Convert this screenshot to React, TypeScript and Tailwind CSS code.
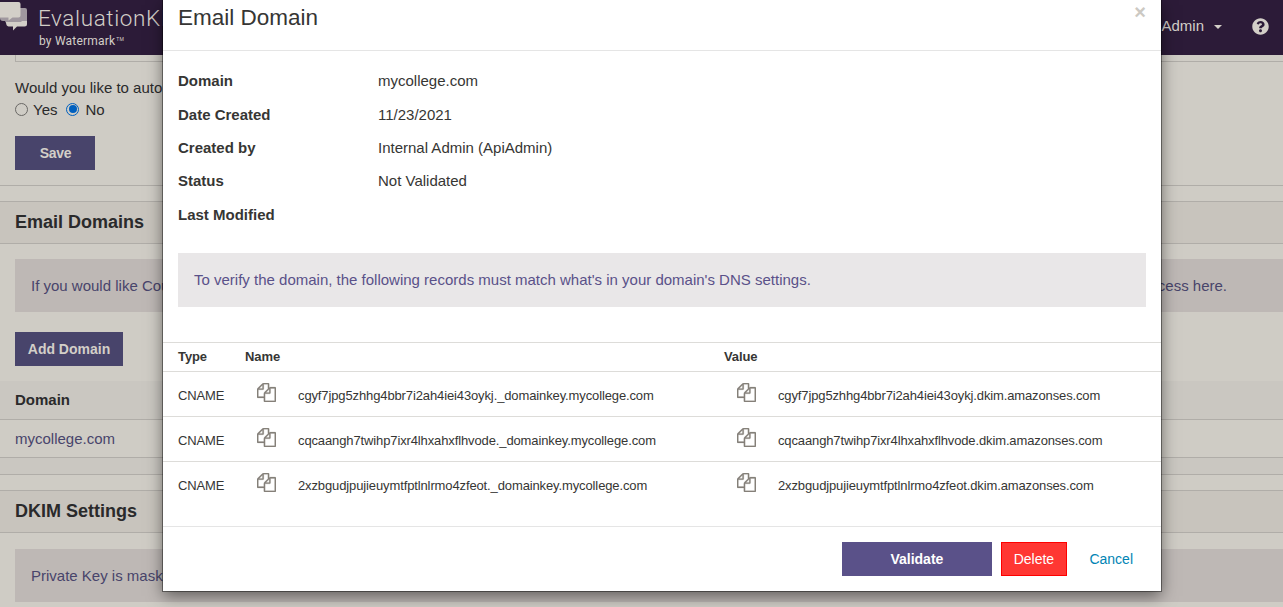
import { ReactNode } from "react"
import { FaQuestionCircle } from "react-icons/fa"

type DnsRecord = {
  type: string
  name: string
  value: string
}

const details = [
  { label: "Domain", value: "mycollege.com" },
  { label: "Date Created", value: "11/23/2021" },
  { label: "Created by", value: "Internal Admin (ApiAdmin)" },
  { label: "Status", value: "Not Validated" },
  { label: "Last Modified", value: "" },
]

const records: DnsRecord[] = [
  {
    type: "CNAME",
    name: "cgyf7jpg5zhhg4bbr7i2ah4iei43oykj._domainkey.mycollege.com",
    value: "cgyf7jpg5zhhg4bbr7i2ah4iei43oykj.dkim.amazonses.com",
  },
  {
    type: "CNAME",
    name: "cqcaangh7twihp7ixr4lhxahxflhvode._domainkey.mycollege.com",
    value: "cqcaangh7twihp7ixr4lhxahxflhvode.dkim.amazonses.com",
  },
  {
    type: "CNAME",
    name: "2xzbgudjpujieuymtfptlnlrmo4zfeot._domainkey.mycollege.com",
    value: "2xzbgudjpujieuymtfptlnlrmo4zfeot.dkim.amazonses.com",
  },
]

const CopyIcon = () => (
  <svg
    viewBox="0 0 1792 1792"
    className="mb-[5px] size-[19px] shrink-0"
    fill="#85807a"
    stroke="#85807a"
    strokeWidth="20"
  >
    <path d="M1696 384q40 0 68 28t28 68v1216q0 40-28 68t-68 28h-960q-40 0-68-28t-28-68v-288h-544q-40 0-68-28t-28-68v-672q0-40 20-88t48-76l408-408q28-28 76-48t88-20h416q40 0 68 28t28 68v328q68-40 128-40h416zm-544 213l-299 299h299v-299zm-640-384l-299 299h299v-299zm196 647l316-316v-416h-384v416q0 40-28 68t-68 28h-416v640h512v-256q0-40 20-88t48-76zm956 804v-1152h-384v416q0 40-28 68t-68 28h-416v640h896z" />
  </svg>
)

const Logo = () => (
  <div className="flex">
    <svg viewBox="0 0 28 32" className="h-8 w-7 shrink-0">
      <path d="M20 8h5q2 0 2 2v13H6l-1-2H3q-3 0-3-3v-2h20z" fill="#a0989f" />
      <path d="M0 2h18.500q2 0 2 2v11.500q0 2-2 2h-6L8.500 20.500v-3H0z" fill="#d3cfc8" />
      <path d="M6 22h15l1-1h5v3q0 2.500-2.500 2.500H17l-4 4v-4H8.500Q6 26 6 22z" fill="#d3cfc8" />
    </svg>
    <div className="pl-[10px] font-[Roboto,sans-serif] text-[#d3cfc8]">
      <div className="mt-[5px] text-[22.500px] leading-[26px] font-light tracking-[0.6px] whitespace-nowrap">
        EvaluationKIT
      </div>
      <div className="mt-[2px] flex pl-px text-[12px] leading-4 tracking-[0.2px]">
        by Watermark
        <span className="pl-px text-[5px] leading-3">TM</span>
      </div>
    </div>
  </div>
)

const NavBar = () => (
  <header className="flex h-[55px] shrink-0 justify-between bg-[#2c1b38]">
    <Logo />
    <div className="flex h-[52px] items-center pr-[14px] text-[15px] text-[#d3cfc8]">
      <span>Admin</span>
      <span className="mt-[2px] ml-[10px] border-x-4 border-t-4 border-x-transparent border-t-[#d3cfc8]" />
      <FaQuestionCircle className="ml-[30px] size-[17px]" />
    </div>
  </header>
)

const PanelHeading = ({ children }: { children: ReactNode }) => (
  <h2 className="flex h-[43px] items-center border-y border-[#b0ada8] bg-[#c8c4bd] px-[15px] text-[18px] font-bold">
    {children}
  </h2>
)

const Radio = ({ checked }: { checked?: boolean }) => (
  <span
    className={`mb-[2px] flex size-[13px] items-center justify-center rounded-full border ${
      checked ? "border-[#0060bf]" : "border-[#6a6865]"
    }`}
  >
    {checked && <span className="size-[8px] rounded-full bg-[#0060bf]" />}
  </span>
)

const SettingsPage = () => (
  <div className="flex h-[607px] flex-col overflow-hidden bg-[#cfccc5] text-[15px] text-[#2a2a2b]">
    <NavBar />
    <div className="ml-[15px] h-[7px] border-b border-l border-[#b0ada8]" />
    <div className="h-[124px] border-b border-[#b0ada8] px-[15px] pt-[15px]">
      <div className="leading-[22px] whitespace-nowrap">Would you like to auto</div>
      <div className="flex h-[22px] items-center">
        <Radio />
        <span className="ml-[5px]">Yes</span>
        <span className="w-[9px]" />
        <Radio checked />
        <span className="ml-[6px]">No</span>
      </div>
      <button className="mt-[15px] h-[34px] w-20 bg-[#48446b] pl-px text-[14px] font-bold tracking-[-0.3px] text-[#d3cfc8]">
        Save
      </button>
    </div>
    <div className="mt-[15px]">
      <PanelHeading>Email Domains</PanelHeading>
      <div className="mt-[15px] ml-[15px] flex h-[53px] items-center justify-between bg-[#beb8b5] pt-px pr-14 pl-4 text-[#48446b]">
        <span>If you would like Cou</span>
        <span>cess here.</span>
      </div>
      <button className="mt-5 ml-[15px] h-[34px] w-[108px] bg-[#48446b] text-[14px] font-bold text-[#d3cfc8]">
        Add Domain
      </button>
      <div className="mt-[15px] flex h-[39px] items-center border-b border-[#b0ada8] bg-[#cac7c1] px-[15px] font-bold">
        Domain
      </div>
      <div className="flex h-[38px] items-center border-b border-[#b0ada8] px-[15px] pt-[2px] text-[#48446b]">
        mycollege.com
      </div>
      <div className="h-[17px] border-b border-[#b0ada8] bg-[#cac7c1]" />
    </div>
    <div className="mt-[15px]">
      <div className="h-[44px]">
        <PanelHeading>DKIM Settings</PanelHeading>
      </div>
      <div className="mt-[15px] ml-[15px] flex h-[53px] items-center bg-[#beb8b5] pt-[2px] pl-4 text-[#48446b]">
        Private Key is mask
      </div>
    </div>
  </div>
)

const EmailDomainModal = () => (
  <div
    role="dialog"
    className="absolute top-0 left-[163px] flex h-[591px] w-[998px] flex-col bg-white text-[15px] text-[#363634] shadow-[0_0_0_1px_rgba(0,0,0,0.4),0_5px_15px_rgba(0,0,0,0.5)]"
  >
    <div className="flex h-[51px] justify-between border-b border-[#e5e5e5] px-[15px]">
      <h1 className="mt-1 text-[22.5px] leading-7">Email Domain</h1>
      <button className="mt-px h-[22px] text-[20px] leading-[22px] font-bold text-[#ccc9c3]">
        ×
      </button>
    </div>

    <dl className="px-[15px] pt-[14px]">
      {details.map(({ label, value }) => (
        <div key={label} className="flex h-[33.3px] items-center">
          <dt className="w-[200px] font-bold">{label}</dt>
          <dd>{value}</dd>
        </div>
      ))}
    </dl>

    <div className="mx-[15px] mt-[21.5px] flex h-[54px] items-center bg-[#e9e7e8] px-4 text-[#5a5189]">
      To verify the domain, the following records must match what's in your domain's DNS settings.
    </div>

    <div className="mt-[35px] text-[13px]">
      <div className="flex h-[30px] items-center border-y border-[#dddcd9] pl-[15px] font-bold tracking-[-0.1px]">
        <span className="w-[67px]">Type</span>
        <span className="w-[479px]">Name</span>
        <span>Value</span>
      </div>
      {records.map((record) => (
        <div
          key={record.name}
          className="flex h-[45px] items-center border-b border-[#dddcd9] pt-[3px] pl-[15px] last:border-transparent"
        >
          <span className="w-[79px] tracking-[-0.15px]">{record.type}</span>
          <CopyIcon />
          <span className="ml-[22px] w-[439px] tracking-[-0.12px]">{record.name}</span>
          <CopyIcon />
          <span className="ml-[22px] tracking-[-0.13px]">{record.value}</span>
        </div>
      ))}
    </div>

    <div className="mt-auto flex h-[65px] items-start justify-end border-t border-[#e5e5e5] pt-[15px] pr-[28px] text-[14px]">
      <button className="h-[34px] w-[150px] bg-[#5a5189] pr-px font-bold text-white">
        Validate
      </button>
      <button className="ml-[9px] h-[34px] w-[66px] border border-[#fe0000] bg-[#ff3733] pr-px text-white">
        Delete
      </button>
      <button className="ml-[22px] h-[34px] text-[#0084b4]">Cancel</button>
    </div>
  </div>
)

const App = () => {
  return (
    <div className="relative h-[607px] w-full overflow-hidden font-['Liberation_Sans',Arial,sans-serif]">
      <SettingsPage />
      <EmailDomainModal />
    </div>
  )
}

export default App
